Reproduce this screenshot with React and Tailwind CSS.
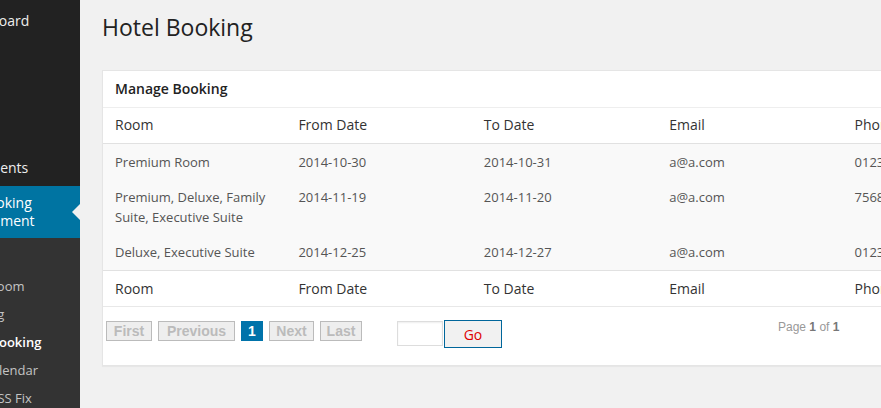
import React from 'react';

const menuTop = [
  { label: 'Dashboard' },
  { sep: true },
  { label: 'Posts' },
  { label: 'Media' },
  { label: 'Pages' },
  { label: 'Comments' },
];

const submenu = [
  { label: 'Settings', pl: 'pl-[17px]' },
  { label: 'Manage Room', pl: 'pl-[17px]' },
  { label: 'All Booking', pl: 'pl-[17px]' },
  { label: 'Manage Booking', pl: 'pl-[17px]', current: true },
  { label: 'Booking Calendar', pl: 'pl-[11px]' },
  { label: 'Custom CSS Fix', pl: 'pl-[19px]' },
];

const columns = ['Room', 'From Date', 'To Date', 'Email', 'Phone'];

const bookings = [
  { room: 'Premium Room', from: '2014-10-30', to: '2014-10-31', email: 'a@a.com', phone: '0123456789' },
  { room: 'Premium, Deluxe, Family Suite, Executive Suite', from: '2014-11-19', to: '2014-11-20', email: 'a@a.com', phone: '7568945632' },
  { room: 'Deluxe, Executive Suite', from: '2014-12-25', to: '2014-12-27', email: 'a@a.com', phone: '0123456789' },
];

const pages = [
  { label: 'First', w: 'w-[46px]' },
  { label: 'Previous', w: 'w-[77px]' },
  { label: '1', w: 'w-[22px]', active: true },
  { label: 'Next', w: 'w-[45px]' },
  { label: 'Last', w: 'w-[42px]' },
];

const font = { fontFamily: '"Open Sans", "Noto Sans", sans-serif' };
const arial = { fontFamily: '"Liberation Sans", Arial, sans-serif' };

function Sidebar() {
  return (
    <div className="w-[80px] shrink-0 overflow-hidden bg-[#222] flex flex-col">
      <div className="w-[160px] ml-[-80px] flex flex-col flex-1">
        <ul className="pt-[4px] text-[14px] leading-[18px] text-[#eee]">
          {menuTop.map((m, i) =>
            m.sep ? (
              <li key={i} className="h-[11px]" />
            ) : (
              <li key={i} className="py-[8px] pl-[37px] whitespace-nowrap">{m.label}</li>
            )
          )}
        </ul>
        <div className="relative bg-[#0074a2] text-white text-[14px] leading-[18px] py-[8px] pl-[28px] pr-[8px] mt-[1px]">
          <div className="w-[118px] indent-[-8px]">Hotel Booking Management</div>
          <span className="absolute right-0 top-1/2 -translate-y-1/2 w-0 h-0 border-y-[8px] border-y-transparent border-r-[8px] border-r-[#f1f1f1]" />
        </div>
        <ul className="flex-1 bg-[#333] pt-[6px] text-[13px] leading-[28px]">
          {submenu.map((s) => (
            <li
              key={s.label}
              className={`${s.pl} whitespace-nowrap ${s.current ? 'font-semibold text-white' : 'text-[#c4c4c4]'}`}
            >
              {s.label}
            </li>
          ))}
        </ul>
      </div>
    </div>
  );
}

function PageButton({ label, w, active }) {
  return (
    <span
      className={
        active
          ? `${w} h-[20px] leading-[20px] text-center bg-[#0073aa] text-white font-bold text-[14px]`
          : `${w} h-[20px] leading-[18px] text-center border border-[#bbb] bg-[#eee] text-[#bbb] font-bold text-[14px]`
      }
      style={arial}
    >
      {label}
    </span>
  );
}

export default function App() {
  return (
    <div className="flex h-[408px] w-[881px] overflow-hidden bg-[#f1f1f1]" style={font}>
      <Sidebar />
      <div className="flex-1 min-w-0 pl-[22px]">
        <h2 className="text-[23px] leading-[29px] text-[#222] pt-[13px] pb-[28px]">Hotel Booking</h2>
        <div className="w-[940px] bg-white border border-[#e5e5e5] shadow-[0_1px_1px_rgba(0,0,0,0.04)]">
          <h3 className="px-[12px] text-[14px] font-semibold text-[#222] leading-[36px] border-b border-[#eee]">
            Manage Booking
          </h3>
          <table className="border-collapse table-fixed w-[927px] text-left">
            <thead>
              <tr className="border-b border-[#e1e1e1]">
                {columns.map((c, j) => (
                  <th key={c} className={`w-[185px] ${j === 0 ? 'pl-[12px]' : 'pl-[10px]'} pr-[10px] pt-[7px] pb-[8px] text-[14px] leading-[19.6px] font-normal text-[#333]`}>{c}</th>
                ))}
              </tr>
            </thead>
            <tbody className="bg-[#f9f9f9]">
              {bookings.map((b, i) => (
                <tr key={i}>
                  {[b.room, b.from, b.to, b.email, b.phone].map((v, j) => (
                    <td key={j} className={`align-top ${j === 0 ? 'pl-[12px]' : 'pl-[10px]'} pr-[10px] pt-[9px] pb-[7px] text-[13px] leading-[19.5px] text-[#555]`}>{v}</td>
                  ))}
                </tr>
              ))}
            </tbody>
            <tfoot>
              <tr className="border-t border-[#e1e1e1] border-b border-b-[#e8e8e8]">
                {columns.map((c, j) => (
                  <th key={c} className={`${j === 0 ? 'pl-[12px]' : 'pl-[10px]'} pr-[10px] pt-[8px] pb-[8px] text-[14px] leading-[19.6px] font-normal text-[#333]`}>{c}</th>
                ))}
              </tr>
            </tfoot>
          </table>
          <div className="flex items-start pl-[3px] pt-[13px] pb-[17px]">
            <div className="flex gap-[6px] mt-[1px]">
              {pages.map((p) => (
                <PageButton key={p.label} {...p} />
              ))}
            </div>
            <input className="ml-[35px] mt-[1px] w-[46px] h-[25px] border border-[#ddd] bg-white shadow-[inset_0_1px_2px_rgba(0,0,0,0.07)]" />
            <button className="ml-[1px] w-[58px] h-[28px] border border-[#00669b] bg-[#f1f1f1] text-[#d00] text-[14px]">Go</button>
            <div className="ml-[276px] -mt-[2px] text-[12px] text-[#999]" style={arial}>
              Page <b className="text-[#777]">1</b> of <b className="text-[#777]">1</b>
            </div>
          </div>
        </div>
      </div>
    </div>
  );
}
